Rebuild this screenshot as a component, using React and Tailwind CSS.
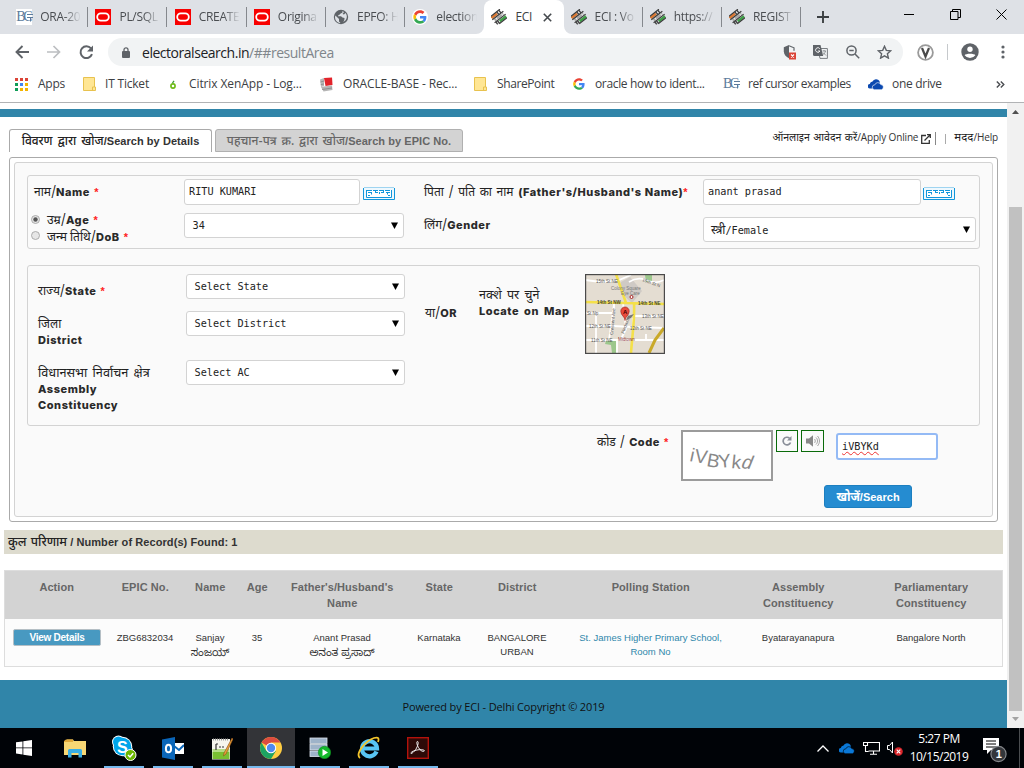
import React from "react";

function Oracle() {
  return (
    <svg width="16" height="16" viewBox="0 0 16 16" className="shrink-0">
      <rect width="16" height="16" fill="#f80000" />
      <rect x="2.2" y="4.4" width="11.6" height="7.2" rx="3.6" fill="none" stroke="#fff" strokeWidth="1.8" />
    </svg>
  );
}

function Bc() {
  return (
    <span className="flex h-4 w-4 shrink-0 items-center bg-white font-['Liberation_Serif',serif] text-[14px] leading-none tracking-[-2.5px] text-[#5b7b9c]">
      BC<svg width="6" height="9" viewBox="0 0 6 9" className="-ml-[3px] shrink-0"><path d="M0 1.500h6M0 4.500h6M3.500 4.500v4" stroke="#5b7b9c" fill="none" /></svg>
    </span>
  );
}

function Globe() {
  return (
    <svg width="16" height="16" viewBox="0 0 16 16" className="shrink-0">
      <circle cx="8" cy="8" r="7.2" fill="#5f6368" />
      <path d="M2.4 6.5 5 9l1 1v2.5l1.5 1.6C4.500 14 2 11.500 2 8zM9 2c1 1 .5 2-1 2.200C7 4.500 7 6 5.500 6L5 7.200h3l1.500 1.300 2 .5c0 2-.5 3-1.500 4 4-1.500 5-6 2.500-9L11 5.500 9.500 5 11 3z" fill="#dee1e6" />
    </svg>
  );
}

function Google({ s = 16 }) {
  return (
    <svg width={s} height={s} viewBox="0 0 48 48" className="shrink-0">
      <circle cx="24" cy="24" r="24" fill="#fff" />
      <g transform="translate(4 4) scale(.833)">
        <path fill="#EA4335" d="M24 9.500c3.540 0 6.710 1.220 9.210 3.600l6.850-6.850C35.900 2.380 30.470 0 24 0 14.620 0 6.510 5.380 2.560 13.220l7.980 6.190C12.430 13.720 17.740 9.500 24 9.500z" />
        <path fill="#4285F4" d="M46.980 24.550c0-1.570-.15-3.090-.38-4.550H24v9.020h12.940c-.58 2.960-2.260 5.480-4.780 7.180l7.730 6c4.510-4.180 7.090-10.360 7.090-17.650z" />
        <path fill="#FBBC05" d="M10.530 28.590c-.48-1.450-.76-2.990-.76-4.590s.27-3.140.76-4.590l-7.980-6.190C.92 16.460 0 20.120 0 24c0 3.880.92 7.540 2.560 10.780l7.970-6.190z" />
        <path fill="#34A853" d="M24 48c6.480 0 11.930-2.130 15.890-5.810l-7.730-6c-2.150 1.450-4.920 2.300-8.160 2.300-6.260 0-11.570-4.220-13.470-9.910l-7.980 6.190C6.510 42.620 14.620 48 24 48z" />
      </g>
    </svg>
  );
}

function Eci() {
  return (
    <svg width="16" height="16" viewBox="0 0 16 16" className="shrink-0">
      <g transform="rotate(-38 8 8)">
        <rect x="1.500" y="2.800" width="7" height="2.600" fill="#dd7a34" />
        <rect x="2.500" y="6.800" width="11" height="2.200" fill="#a9a9a9" />
        <rect x="6" y="10.600" width="8" height="2.600" fill="#3fa047" />
        <path d="M1 2.400h12.500M1 6.100h14M1 9.800h14M4 13.500h10" stroke="#3b3b3b" strokeWidth="1.200" />
        <path d="M9.500 2.500v3.500M12 2.500v3.500M2.500 10v3M4.500 10v3.500" stroke="#444" strokeWidth="1.400" />
        <path d="M10.800 3.500v1.500M5 7v2M12 7v2" stroke="#eee" strokeWidth="1" />
      </g>
    </svg>
  );
}

function OneDrive({ a = "#0b49b0", gap = "#fff", w = 16 }) {
  return (
    <svg width={w} height={w * 0.6875} viewBox="0 0 16 11" className="shrink-0">
      <path d="M4 9.500H2.200A2.200 2.200 0 0 1 1.800 5 3 3 0 0 1 4.500 2.600 4 4 0 0 1 11.500 2L12 6 6 10z" fill={a} />
      <path d="M6.500 10.700A2.400 2.400 0 0 1 6.800 5.900 3.200 3.200 0 0 1 12.800 5.600 2.600 2.600 0 0 1 13.500 10.700z" fill={a} stroke={gap} strokeWidth=".6" />
    </svg>
  );
}

const tabs = [
  { icon: <Bc />, label: "ORA-20", sep: true },
  { icon: <Oracle />, label: "PL/SQL", sep: true },
  { icon: <Oracle />, label: "CREATE", sep: true },
  { icon: <Oracle />, label: "Origina", sep: true },
  { icon: <Globe />, label: "EPFO: H", sep: true },
  { icon: <Google />, label: "election", sep: false },
  { icon: <Eci />, label: "ECI", active: true },
  { icon: <Eci />, label: "ECI : Vo", sep: true },
  { icon: <Eci />, label: "https://", sep: true },
  { icon: <Eci />, label: "REGIST", sep: true },
];

function TabStrip() {
  return (
    <div className="flex h-[34px] bg-[#dee1e6] pl-[9.3px] text-[12px] tracking-[-0.3px]">
      {tabs.map((t, i) =>
        t.active ? (
          <div key={i} className="relative flex w-[79.2px] shrink-0 items-center rounded-t-[8px] bg-white pl-[7px]">
            {t.icon}
            <span className="ml-2 w-[17px] whitespace-nowrap text-[#3c4043]">{t.label}</span>
            <svg width="9" height="9" viewBox="0 0 9 9" className="ml-[11px]"><path d="M.8.8l7.400 7.400M8.200.8.800 8.200" stroke="#45494d" strokeWidth="1.600" /></svg>
            <svg width="8" height="8" viewBox="0 0 8 8" className="absolute bottom-0 -left-2"><path d="M8 0v8H0A8 8 0 0 0 8 0z" fill="#fff" /></svg>
            <svg width="8" height="8" viewBox="0 0 8 8" className="absolute -right-2 bottom-0"><path d="M0 0v8h8A8 8 0 0 1 0 0z" fill="#fff" /></svg>
          </div>
        ) : (
          <div key={i} className="flex w-[79.2px] shrink-0 items-center pl-[7px]">
            {t.icon}
            <span className="ml-2 w-[41px] whitespace-nowrap text-[#4a4d51] [mask-image:linear-gradient(to_right,#000_60%,transparent)]">{t.label}</span>
            {t.sep && <span className="ml-[6px] h-5 w-px bg-[#85888d]" />}
          </div>
        )
      )}
      <svg width="12" height="12" viewBox="0 0 12 12" className="mt-[11px] ml-[15.500px]"><path d="M6 0v12M0 6h12" stroke="#3c4043" strokeWidth="1.900" /></svg>
      <svg width="10" height="10" viewBox="0 0 10 10" className="mt-[9px] ml-[75px]"><path d="M0 5.500h10" stroke="#000" /></svg>
      <svg width="11" height="11" viewBox="0 0 11 11" className="mt-[9px] ml-[36px]"><path d="M.5 2.500h7.500v8H.5zM2.500 2.500v-2h8v8H8" fill="none" stroke="#000" /></svg>
      <svg width="11" height="11" viewBox="0 0 11 11" className="mt-[9px] ml-[35px]"><path d="M.5.5l10 10M10.500.5l-10 10" stroke="#000" /></svg>
    </div>
  );
}

function Toolbar() {
  return (
    <div className="flex h-[36px] items-center bg-white pl-[15px]">
      <svg width="14" height="14" viewBox="0 0 14 14"><path d="M14 7H1.500M7.500 1 1.500 7l6 6" fill="none" stroke="#5f6368" strokeWidth="1.900" /></svg>
      <svg width="14" height="14" viewBox="0 0 14 14" className="ml-[18px]"><path d="M0 7h12.500M6.500 1l6 6-6 6" fill="none" stroke="#bcbec1" strokeWidth="1.700" /></svg>
      <svg width="15" height="15" viewBox="0 0 15 15" className="ml-[18px]"><path d="M13 9.200A5.900 5.900 0 1 1 12 3.400" fill="none" stroke="#5f6368" strokeWidth="2" /><path d="M14 .6v6H8z" fill="#5f6368" /></svg>
      <div className="ml-[14px] flex h-7 w-[795px] items-center rounded-full bg-[#f1f3f4] pl-[14px]">
        <svg width="8" height="11" viewBox="0 0 8 11"><rect y="4" width="8" height="7" rx="1" fill="#5f6368" /><path d="M2 4.500V2.800a2 2 0 0 1 4 0v1.700" fill="none" stroke="#5f6368" strokeWidth="1.300" /></svg>
        <span className="ml-[12px] w-[641px] text-[14px] tracking-[-0.47px] whitespace-nowrap text-[#202124]">electoralsearch.in<span className="text-[#80868b]">/##resultArea</span></span>
        <svg width="14" height="15" viewBox="0 0 14 15"><path d="M6 0 .8 2.200v4C.8 9.500 3 12 6 13.200z" fill="#5f6368" /><path d="M6 .8l5 2v3" fill="none" stroke="#5f6368" strokeWidth="1.200" /><rect x="6" y="7.500" width="7" height="7" fill="#db4437" /><path d="M8 9.500l3 3M11 9.500l-3 3" stroke="#fff" strokeWidth="1.100" /></svg>
        <svg width="15" height="14" viewBox="0 0 15 14" className="ml-[16px]"><path d="M5 3.500h9.400v9.900H7z" fill="#f1f3f4" stroke="#7b7f83" /><path d="M0 0h7.500l2.700 11H1.500A1.500 1.500 0 0 1 0 9.500z" fill="#5f6368" /><path d="M6.800 3.700A2.300 2.300 0 1 0 7 6H5" fill="none" stroke="#fff" strokeWidth=".9" /><path d="M9.500 6H13M11 5v1M12.500 6c-.5 2-1.500 3-2.500 3.500M10 7.500l3 3" fill="none" stroke="#7b7f83" strokeWidth=".8" /></svg>
        <svg width="14" height="14" viewBox="0 0 14 14" className="ml-[18px]"><circle cx="5.500" cy="5.500" r="4.600" fill="none" stroke="#5f6368" strokeWidth="1.500" /><path d="M9 9l4.200 4.200M3.300 5.500h4.400" stroke="#5f6368" strokeWidth="1.500" /></svg>
        <svg width="15" height="14" viewBox="0 0 15 14" className="ml-[17px]"><path d="M7.500 1.300l1.800 4.100 4.400.4-3.300 3 1 4.300-3.900-2.300-3.900 2.300 1-4.300-3.300-3 4.400-.4z" fill="none" stroke="#5f6368" strokeWidth="1.400" /></svg>
      </div>
      <svg width="17" height="17" viewBox="0 0 17 17" className="ml-[14px]"><circle cx="8.500" cy="8.500" r="7.400" fill="#fff" stroke="#9a9a9a" strokeWidth="1.800" /><path d="M5 4l3.500 8.500L12 4" fill="none" stroke="#4a4a4a" strokeWidth="2.200" /></svg>
      <span className="ml-[13px] h-4 w-px bg-[#c6c9cc]" />
      <svg width="18" height="18" viewBox="0 0 18 18" className="ml-[13px]"><circle cx="9" cy="9" r="8.700" fill="#5f6368" /><circle cx="9" cy="6.200" r="2.700" fill="#fff" /><path d="M3.600 12.300c1-2 9.800-2 10.800 0A6.700 6.700 0 0 1 9 15a6.700 6.700 0 0 1-5.400-2.700z" fill="#fff" /></svg>
      <svg width="4" height="14" viewBox="0 0 4 14" className="ml-[21.500px]"><g fill="#5f6368"><circle cx="2" cy="2" r="1.600" /><circle cx="2" cy="7" r="1.600" /><circle cx="2" cy="12" r="1.600" /></g></svg>
    </div>
  );
}

function Folder() {
  return (
    <svg width="13" height="14" viewBox="0 0 13 14" className="shrink-0"><path d="M.5.5h11v9.500h1v3.500H.5z" fill="#ffe694" stroke="#e8c24f" /><path d="M9.500 13.500V10h2" fill="none" stroke="#e8c24f" /></svg>
  );
}

function Mark({ icon, label, cls }) {
  return (
    <div className={"flex shrink-0 items-center whitespace-nowrap " + cls}>
      {icon}
      <span>{label}</span>
    </div>
  );
}

function Bookmarks() {
  const colors = ["#db4437", "#db4437", "#db4437", "#0f9d58", "#4285f4", "#f4b400", "#0f9d58", "#f4b400", "#f4b400"];
  return (
    <div className="flex h-[33px] items-center border-b border-[#b1b3b5] bg-white pb-[4px] pl-[15px] text-[12px] text-[#3c4043]">
      <Mark cls="w-[68px] gap-[10px] tracking-[-0.25px]" label="Apps" icon={<svg width="13" height="13" viewBox="0 0 13 13">{colors.map((c, i) => <rect key={i} x={(i % 3) * 5} y={Math.floor(i / 3) * 5} width="3" height="3" fill={c} />)}</svg>} />
      <Mark cls="w-[87px] gap-[9px] tracking-[-0.2px]" label="IT Ticket" icon={<Folder />} />
      <Mark cls="w-[149px] gap-[13px] tracking-[-0.1px]" label="Citrix XenApp - Log..." icon={<svg width="6" height="9" viewBox="0 0 6 9"><circle cx="3" cy="6" r="2.100" fill="none" stroke="#6cbb14" strokeWidth="1.600" /><path d="M2.500 3 4 .8" stroke="#3c9b35" strokeWidth="1.300" /></svg>} />
      <Mark cls="w-[155px] gap-[9px] tracking-[-0.12px]" label="ORACLE-BASE - Rec..." icon={<svg width="15" height="15" viewBox="0 0 15 15"><path d="M1 2.500 5 1v8l-3 1z" fill="#b9b9b9" /><path d="M5 1l8-.5.5 7.500-7 1z" fill="#e2232a" /><path d="M2 10l4.500-.8L13 8.500l.5 4.500-9 1.500z" fill="#b5b5b5" /><path d="M1.500 5 5 4M1.800 7.500 5 7M3 12.500l10-1.500" stroke="#868686" strokeWidth=".8" /></svg>} />
      <Mark cls="w-[98px] gap-[10px] tracking-[-0.4px]" label="SharePoint" icon={<Folder />} />
      <Mark cls="w-[151px] gap-[9px] tracking-[-0.35px]" label="oracle how to ident..." icon={<Google s={14} />} />
      <Mark cls="w-[145px] gap-[9px] tracking-[-0.45px]" label="ref cursor examples" icon={<Bc />} />
      <Mark cls="w-[128px] gap-[8px] tracking-[-0.3px]" label="one drive" icon={<OneDrive />} />
      <svg width="9" height="7" viewBox="0 0 9 7"><path d="M.8.5l3 3-3 3M4.800.5l3 3-3 3" fill="none" stroke="#4a4d51" strokeWidth="1.400" /></svg>
    </div>
  );
}

function Keyboard() {
  return (
    <svg width="32" height="13" viewBox="0 0 32 13" className="shrink-0">
      <path d="M.5 1v11.500h31V1" fill="#eef8fe" stroke="#1296db" />
      <path d="M1 .5h30" stroke="#9fd4f0" />
      <path d="M3.500 3v7.500h25V3" fill="#fff" stroke="#1296db" />
      <path d="M4 3.500h24" stroke="#1296db" strokeDasharray="5 1" />
      <path d="M5 5.500h4M13 5.500h2M18 5.500h2M23 5.500h4M5 8.500h2M25 8.500h2" stroke="#1296db" />
      <path d="M8.500 5v2.500M12.500 3v3M16.500 5v2M20.500 3v3M24.500 5v2.500" stroke="#1296db" />
    </svg>
  );
}

const MONO = "font-['DejaVu_Sans_Mono','Noto_Sans',monospace] text-[10.2px] text-[#222] whitespace-pre";
const B = "font-['Inter','Noto_Sans',sans-serif] font-extrabold text-[11px] tracking-[0.55px] text-[#2a2a2a]";

function Arrow() {
  return <svg width="7" height="7" viewBox="0 0 7 7" className="-mt-px"><path d="M0 .5h7L3.500 7z" fill="#000" /></svg>;
}

function Select({ label, cls }) {
  return (
    <div className={"flex h-[25px] shrink-0 items-center justify-between rounded-[3px] border border-[#d3d3d3] bg-white pr-[5px] pl-[7.500px] " + MONO + " " + cls}>
      <span>{label}</span>
      <Arrow />
    </div>
  );
}

function Field({ label, cls }) {
  return (
    <div className={"flex h-[26px] shrink-0 items-center rounded-[3px] border border-[#d3d3d3] bg-white px-[4px] " + MONO + " " + cls}>
      <span>{label}</span>
    </div>
  );
}

function Radio({ on }) {
  return (
    <svg width="9" height="9" viewBox="0 0 9 9" className="shrink-0"><circle cx="4.500" cy="4.500" r="4" fill="#e6e6e6" stroke="#a4a4a4" strokeWidth=".9" />{on && <circle cx="4.500" cy="4.500" r="2.200" fill="#555" />}</svg>
  );
}

function Hi({ children, cls = "text-[12px]" }) {
  return <span className={"font-['Noto_Sans_Devanagari','Noto_Sans',sans-serif] tracking-normal text-[#222] " + cls}>{children}</span>;
}

function Star() {
  return <span className="font-['Liberation_Sans',sans-serif] text-[11px] font-bold text-[#f22]">*</span>;
}

function MapThumb() {
  return (
    <svg width="80" height="80" viewBox="0 0 80 80" className="shrink-0">
      <rect width="80" height="80" fill="#e4ddd2" />
      <path d="M36 8l9-5 12 14-10 12-12-11z" fill="#cfcac5" />
      <path d="M60 1h7v7h-6zM21 67h10v12h-4l-1-8-6-1z" fill="#9cc78c" />
      <g stroke="#fff" strokeWidth="1.800" fill="none">
        <path d="M0 6l16 2 18-2 12-5M44 8c6-4 12-4 17-2s10 4 18 0M0 39h29v-9M0 52h28l20 1 31 1M0 66h79M11 39v40M32 66v13M29 30l-5 36M38 29l3 26-5 10M49 42h30M48 54V44M61 60v7" />
      </g>
      <g stroke="#f4e04a" strokeWidth="2.600" fill="none"><path d="M0 28l79 2M31 0l10 29M49 29c1 15-2 35-3 50" /></g>
      <path d="M79 54L70 66l-6 13" stroke="#c9a929" strokeWidth="3" fill="none" />
      <g fontFamily="Liberation Sans" fontSize="4.500" fill="#555">
        <text x="11" y="9">15th St NE</text><text x="26" y="16" fill="#777">Colony Square</text><text x="36" y="20.500" fill="#777">Eye Care</text>
        <text x="12" y="29.500" fill="#443" fontWeight="bold">14th St NW</text><text x="53" y="31" fill="#443" fontWeight="bold">14th St NE</text>
        <text x="2" y="40.500">St Np</text><text x="57" y="43.500">13th St NE</text><text x="4" y="53.500">12th St NE</text><text x="45" y="55.500">12th St NE</text><text x="6" y="67.500">11th St NE</text><text x="33" y="66.500" fill="#833">Midtown</text>
        <text transform="translate(28 61) rotate(-85)">Crescent Ave</text><text transform="translate(39 60) rotate(-70)">Piedmont</text><text transform="translate(57 7) rotate(20)">15th St N</text>
      </g>
      <circle cx="46.500" cy="23" r="1.500" fill="#fff" stroke="#a22" />
      <path d="M41 46l2-4 6-2-3 4z" fill="#777" />
      <path d="M40 46.500c0-4-4.200-5-4.200-9.300a4.200 4.200 0 0 1 8.400 0c0 4.300-4.200 5.300-4.200 9.300z" fill="#ea4b3c" stroke="#a3281f" strokeWidth=".7" />
      <text x="37.900" y="39.500" fontFamily="Liberation Sans" fontSize="6" fontWeight="bold" fill="#400">A</text>
      <rect x=".6" y=".6" width="78.800" height="78.800" fill="none" stroke="#4a4a4a" strokeWidth="1.200" />
    </svg>
  );
}

function Personal() {
  return (
    <div className="ml-[12px] flex h-[74px] w-[953px] rounded-[3px] border border-[#d3d3d3]">
      <div className="w-[156px] whitespace-nowrap">
        <div className="mt-[5px] ml-[6px] h-[18px] leading-[18px]"><Hi>नाम/</Hi><b className={B}>Name</b> <Star /></div>
        <div className="mt-[12px] ml-[3px] flex h-[16px] items-center gap-[7px] leading-[16px]"><Radio on /><span className="pt-[1px]"><Hi>उम्र/</Hi><b className={B}>Age</b> <Star /></span></div>
        <div className="ml-[3px] flex h-[17px] items-center gap-[7px] leading-[16px]"><Radio /><span className="pt-[1px]"><Hi>जन्म तिथि/</Hi><b className={B}>DoB</b> <Star /></span></div>
      </div>
      <div className="w-[240px]">
        <div className="mt-[3px] flex items-center gap-[3px]"><Field cls="w-[176px]" label="RITU KUMARI" /><span className="pt-[3px]"><Keyboard /></span></div>
        <Select cls="mt-[8px] w-[220px]" label="34" />
      </div>
      <div className="w-[279px] whitespace-nowrap">
        <div className="mt-[5px] h-[18px] leading-[18px]"><Hi cls="text-[12px] [word-spacing:1.5px]">पिता / पति का नाम </Hi><b className={B}>(Father's/Husband's Name)</b><Star /></div>
        <div className="mt-[15px] h-[18px] leading-[18px]"><Hi>लिंग/</Hi><b className={B}>Gender</b></div>
      </div>
      <div>
        <div className="mt-[3px] flex items-center gap-[2px]"><Field cls="w-[218px]" label="anant prasad" /><span className="pt-[3px]"><Keyboard /></span></div>
        <div className={"mt-[12px] flex h-[25px] w-[273px] items-center justify-between rounded-[3px] border border-[#d3d3d3] bg-white pr-[5px] pl-[7px] " + MONO}>
          <span className="pt-[2px]"><Hi cls="text-[12px]">स्त्री</Hi>/Female</span>
          <Arrow />
        </div>
      </div>
    </div>
  );
}

function Place() {
  return (
    <div className="mt-[16px] ml-[12px] flex h-[161px] w-[953px] rounded-[3px] border border-[#d3d3d3] whitespace-nowrap">
      <div className="w-[158px] pl-[10px] leading-[16px]">
        <div className="mt-[15px] h-[16px]"><Hi>राज्य/</Hi><b className={B}>State</b> <Star /></div>
        <div className="mt-[17px] h-[16px]"><Hi>जिला</Hi></div>
        <div className="h-[16px]"><b className={B}>District</b></div>
        <div className="mt-[17px] h-[16px]"><Hi cls="text-[12.700px] [word-spacing:2px]">विधानसभा निर्वाचन क्षेत्र</Hi></div>
        <div className="h-[16px]"><b className={B}>Assembly</b></div>
        <div className="h-[16px]"><b className={B}>Constituency</b></div>
      </div>
      <div className="w-[239px]">
        <Select cls="mt-[8px] w-[219px]" label="Select State" />
        <Select cls="mt-[12px] w-[219px]" label="Select District" />
        <Select cls="mt-[24px] w-[219px]" label="Select AC" />
      </div>
      <div className="mt-[37px] h-4 w-[54px] leading-4"><Hi>या/</Hi><b className={B}>OR</b></div>
      <div className="mt-[19px] w-[106px] leading-4">
        <div className="h-4"><Hi cls="text-[12.500px] [word-spacing:2px]">नक्शे पर चुने</Hi></div>
        <div className="h-4 [word-spacing:2px]"><b className={B}>Locate on Map</b></div>
      </div>
      <div className="mt-[8px]"><MapThumb /></div>
    </div>
  );
}

function Captcha() {
  return (
    <div>
      <div className="mt-[4px] ml-[582px] flex h-[51px] whitespace-nowrap">
        <div className="mt-[2px] h-4 w-[84px] leading-4"><Hi cls="text-[12px] [word-spacing:1px]">कोड / </Hi><b className={B}>Code</b> <Star /></div>
        <div className="h-[51px] w-[92px] border-2 border-[#9b9b9b] bg-white">
          <svg width="88" height="47" viewBox="0 0 88 47">
            <g fontFamily="Liberation Sans" fontSize="19" fill="#888">
              <text transform="translate(6 29) rotate(12)">i</text><text transform="translate(11 30) rotate(8)">V</text><text transform="translate(23 34) rotate(10)">B</text>
              <text transform="translate(36 36) rotate(-6)">Y</text><text transform="translate(48 36) rotate(6)">k</text><text transform="translate(57 36) rotate(6) skewX(-16)">d</text>
            </g>
          </svg>
        </div>
        <div className="ml-[3px] flex h-[22px] w-[22px] items-center justify-center border border-[#0a6b0a]">
          <svg width="10" height="10" viewBox="0 0 10 10"><path d="M8.500 6.500A3.800 3.800 0 1 1 7.600 2.300" fill="none" stroke="#8a8f99" strokeWidth="1.700" /><path d="M9.500 0v4.500H5z" fill="#8a8f99" /></svg>
        </div>
        <div className="ml-[3px] flex h-[22px] w-[23px] items-center justify-center border border-[#0a6b0a]">
          <svg width="14" height="12" viewBox="0 0 14 12"><path d="M0 3.500h3L7 .2v11.600L3 8.500H0z" fill="#888" /><path d="M8.500 4c1 1 1 3 0 4M10 2.500c2 2 2 5 0 7M11.500 1c2.600 3 2.600 7 0 10" fill="none" stroke="#999" strokeWidth=".9" /></svg>
        </div>
        <div className={"mt-[3px] ml-[12px] flex h-[27px] w-[102px] items-center rounded-[3px] border-2 border-[#94baf5] bg-white pl-[4px] " + MONO}>
          <span className="[text-decoration:underline_wavy_#e33_0.6px] [text-underline-offset:1px]">iVBYKd</span>
        </div>
      </div>
      <div className="mt-[4px] ml-[809px] flex h-[23px] w-[88px] items-center justify-center rounded-[3px] border border-[#1c7fc0] bg-[#258cd1] whitespace-nowrap">
        <span className="font-['Liberation_Sans','Noto_Sans_Devanagari',sans-serif] text-[11px] font-bold text-white"><span className="text-[12px]">खोजें</span>/Search</span>
      </div>
    </div>
  );
}

const cols = [
  ["Action", "w-[105px]"], ["EPIC No.", "w-[72px]"], ["Name", "w-[58px]"], ["Age", "w-[36px]"], ["Father's/Husband's\nName", "w-[134px]"],
  ["State", "w-[60px]"], ["District", "w-[96px]"], ["Polling Station", "w-[171px]"], ["Assembly\nConstituency", "w-[124px]"], ["Parliamentary\nConstituency", "w-[142px]"],
];
const vals = [
  null, "ZBG6832034",
  <>Sanjay<br /><span className="text-[10.500px]">ಸಂಜಯ್</span></>,
  "35",
  <>Anant Prasad<br /><span className="text-[10.500px]">ಅನಂತ ಪ್ರಸಾದ್</span></>,
  "Karnataka", "BANGALORE\nURBAN", "St. James Higher Primary School,\nRoom No", "Byatarayanapura", "Bangalore North",
];

function Results() {
  return (
    <div className="ml-[4px] w-[999px] font-['Liberation_Sans','Noto_Sans_Devanagari','Noto_Sans_Kannada',sans-serif]">
      <div className="mt-[8px] h-[24px] bg-[#dddbce] pl-[4px] text-[11px] leading-[24px] font-bold tracking-[0.08px] whitespace-nowrap text-[#333]"><Hi cls="text-[12.500px] font-medium [word-spacing:1px]">कुल परिणाम</Hi> / Number of Record(s) Found: 1</div>
      <div className="mt-[16px] h-[97px] border border-[#ddd] bg-[#fcfcfc]">
        <div className="flex h-[48px] bg-[#d3d3d3] pt-[8px] text-center text-[11px] leading-4 font-bold tracking-[0.08px] whitespace-pre text-[#666]">
          {cols.map(([c, w]) => <div key={c} className={"shrink-0 pr-[1.500px] " + w}>{c}</div>)}
        </div>
        <div className="flex pt-[12px] text-center text-[9.500px] leading-[14px] tracking-normal whitespace-pre text-[#333]">
          {vals.map((v, i) => (
            <div key={i} className={"shrink-0 pr-[2px] " + cols[i][1] + (i === 7 ? " text-[#2f87ab]" : "")}>
              {v || <div className="mt-[-2px] ml-[8px] h-[17px] w-[88px] rounded-[2px] border border-[#b5bfc5] bg-[#4899c1] text-[10px] leading-[16px] font-bold tracking-[-0.25px] text-white">View Details</div>}
            </div>
          ))}
        </div>
      </div>
    </div>
  );
}

function Page() {
  return (
    <div className="w-[1007px] shrink-0">
      <div className="mt-[6px] h-[8px] bg-[#3085a9]" />
      <div className="flex h-[40px] items-start justify-between pt-[12px] pr-[9px] pl-[9px] font-['Liberation_Sans','Noto_Sans_Devanagari',sans-serif] text-[11px] font-bold tracking-[0.05px] whitespace-nowrap">
        <div className="flex gap-[4px]">
          <div className="h-[23px] w-[203px] rounded-t-[3px] border border-b-0 border-[#aaa] text-center leading-[23px] text-[#333]"><Hi cls="text-[12px] font-medium [word-spacing:2px]">विवरण द्वारा खोज</Hi>/Search by Details</div>
          <div className="h-[23px] w-[248px] -ml-px rounded-t-[3px] border border-[#b0b0b0] bg-[#d3d3d3] text-center leading-[23px] text-[#666]"><span className="font-['Noto_Sans_Devanagari','Noto_Sans',sans-serif] text-[12px] font-medium [word-spacing:1.7px]">पहचान-पत्र क्र. द्वारा खोज</span>/Search by EPIC No.</div>
        </div>
        <div className="flex items-center pt-px font-['Open_Sans','Noto_Sans_Devanagari',sans-serif] text-[10px] font-normal tracking-[-0.15px] text-[#333]">
          <span><Hi cls="text-[10.500px] [word-spacing:0.8px]">ऑनलाइन आवेदन करें</Hi>/Apply Online</span>
          <svg width="10" height="10" viewBox="0 0 10 10" className="ml-[3px]"><path d="M5 1.500H.7v7.800h7.600V6M3.500 6.500 9 1M6 .7h3.300V4" fill="none" stroke="#333" strokeWidth="1.300" /></svg>
          <span className="ml-[4px] h-[13px] w-px bg-[#888]" />
          <span className="ml-[9px] h-[10px] w-px bg-[#aaa]" />
          <span className="ml-[8px]"><Hi cls="text-[11.500px]">मदद</Hi>/Help</span>
        </div>
      </div>
      <div className="ml-[9px] h-[365px] w-[989px] rounded-[3px] border border-[#aaa] p-[4px]">
        <div className="h-[355px] rounded-[3px] border border-[#d3d3d3] bg-[#fafafa] pt-[12px]">
          <Personal />
          <Place />
          <Captcha />
        </div>
      </div>
      <Results />
      <div className="mt-[13px] h-[48px] bg-[#3085a9] pt-[3px] text-center text-[11px] leading-[48px] tracking-[-0.15px] text-[#111]">Powered by ECI - Delhi Copyright © 2019</div>
    </div>
  );
}

function Scrollbar() {
  return (
    <div className="flex w-[17px] flex-col items-center bg-[#f1f1f1]">
      <svg width="7" height="4" viewBox="0 0 7 4" className="mt-[7px]"><path d="M0 4l3.500-4L7 4z" fill="#505050" /></svg>
      <div className="mt-[93px] h-[504px] w-[13px] bg-[#c1c1c1]" />
      <svg width="7" height="4" viewBox="0 0 7 4" className="mt-[6px]"><path d="M0 0h7L3.500 4z" fill="#a3a3a3" /></svg>
    </div>
  );
}

const apps = [
  { cls: "w-[48px]", line: "", icon: <svg width="16" height="16" viewBox="0 0 16 16"><path d="M0 2.300 6.500 1.400v6.100H0zM7.300 1.300 16 0v7.500H7.300zM0 8.300h6.500v6.200L0 13.600zM7.300 8.300H16V16l-8.700-1.300z" fill="#fff" /></svg> },
  { cls: "w-[51px] pl-[2px]", line: "", icon: <svg width="22" height="19" viewBox="0 0 22 19"><path d="M0 2h2l1-1.500h6L10 2h12v14H0z" fill="#f7d774" /><path d="M2 .5h7V3H0V2z" fill="#e0a93a" /><path d="M4 18.500v-7a1.500 1.500 0 0 1 1.500-1.500h11a1.500 1.500 0 0 1 1.500 1.500v7h-3.500V14h-7v4.500z" fill="#38aee6" /></svg> },
  { cls: "w-[49px] pl-[1px]", line: "w-[40px]", icon: <svg width="26" height="26" viewBox="0 0 26 26"><circle cx="7.500" cy="7" r="6.500" fill="#fff" /><circle cx="15.500" cy="15.500" r="6.500" fill="#fff" /><circle cx="11.500" cy="11.500" r="9.700" fill="#fff" /><circle cx="7.500" cy="7" r="5.500" fill="#00a5ea" /><circle cx="15.500" cy="15.500" r="5.500" fill="#00a5ea" /><circle cx="11.500" cy="11.500" r="8.700" fill="#00a5ea" /><text x="6" y="17.500" fontFamily="Liberation Sans" fontSize="16" fontWeight="bold" fill="#fff">S</text><circle cx="19.500" cy="20" r="5.500" fill="#6bb700" stroke="#fff" strokeWidth="1" /><path d="M17 20l2 2 3.200-3.800" fill="none" stroke="#fff" strokeWidth="1.500" /></svg> },
  { cls: "w-[49px]", line: "w-[40px]", icon: <svg width="22" height="23" viewBox="0 0 22 23"><rect x="9" y="6" width="13" height="11" fill="#fff" /><path d="M12 9l5 4 5-5" fill="none" stroke="#0a66b9" strokeWidth="2" /><path d="M0 2.500 13 0v23L0 20.500z" fill="#0a66b9" /><ellipse cx="6.500" cy="11.500" rx="2.600" ry="3.700" fill="none" stroke="#fff" strokeWidth="2" /></svg> },
  { cls: "w-[50px]", line: "w-[40px]", icon: <svg width="22" height="23" viewBox="0 0 22 23"><path d="M1 2h18v20.500H1z" fill="#f6f6ee" /><path d="M1.500 15h17v7h-17z" fill="#78bf31" /><path d="M1.500 12h17v3h-17z" fill="#b5dc86" /><path d="M2 2.500h16" stroke="#999" strokeDasharray="1 1" strokeWidth="2" /><path d="M5 7v6M8 10h2M11 10h2M5 7h2" stroke="#333" strokeWidth="1.200" /><path d="M21 1 13 16l-.5 3 2.500-2 7-15z" fill="#e9a13a" stroke="#8a4c17" strokeWidth=".6" /></svg> },
  { cls: "w-[48px] bg-[#333438]", line: "w-[48px]", icon: <svg width="22" height="22" viewBox="0 0 22 22"><circle cx="11" cy="11" r="11" fill="#ffcd42" /><path d="M11 11 1.500 5.500A11 11 0 0 1 20.500 5.500H11z" fill="#dc4c3f" /><path d="M1.500 5.500A11 11 0 0 0 11 22l5-8.200-5 2.200-4.700-2.300z" fill="#1da462" /><circle cx="11" cy="11" r="5.200" fill="#fff" /><circle cx="11" cy="11" r="4.200" fill="#4f8af0" /></svg> },
  { cls: "w-[49px]", line: "w-[40px]", icon: <svg width="22" height="22" viewBox="0 0 22 22"><g fill="#9eb3c9" stroke="#dfe7ef" strokeWidth=".8"><rect x="1" y="1" width="17" height="5.500" /><rect x="1" y="7.500" width="17" height="5.500" /><rect x="1" y="14" width="17" height="5.500" /></g><circle cx="15.500" cy="15.500" r="6.200" fill="#14b82c" stroke="#0b8a1c" strokeWidth=".6" /><path d="M13.500 12l5.500 3.500-5.500 3.500z" fill="#fff" /></svg> },
  { cls: "w-[49px]", line: "w-[40px]", icon: <svg width="24" height="24" viewBox="0 0 24 24"><path d="M19.500 15.500A7.500 7.500 0 1 1 20 12.500H7" fill="none" stroke="#58c5f4" strokeWidth="4.200" /><path d="M3 22C-2 18 8 5 17 2c5-1.500 5 1 4 4" fill="none" stroke="#f4c52b" strokeWidth="1.800" /></svg> },
  { cls: "w-[49px]", line: "w-[40px]", icon: <svg width="22" height="22" viewBox="0 0 22 22"><rect x=".7" y=".7" width="20.600" height="20.600" fill="#2d0a08" stroke="#b3120b" strokeWidth="1.400" /><path d="M10.500 4.500c2 0-.5 9-6 12-1 .5-1-1.500 2-2.500 3-1.200 8-2 10.500-.8 1.500 1-1 2-3 .3C11 11.500 8.500 4.500 10.500 4.500z" fill="none" stroke="#fff" strokeWidth=".9" /></svg> },
];

function Taskbar() {
  return (
    <div className="flex h-[40px] bg-[#000307] text-white">
      {apps.map((a, i) => (
        <div key={i} className={"relative flex shrink-0 items-center justify-center " + a.cls}>
          {a.icon}
          {a.line && <span className={"absolute bottom-0 h-[2px] bg-[#76b9ed] " + a.line} />}
        </div>
      ))}
      <div className="flex flex-1 items-center justify-end">
        <svg width="12" height="7" viewBox="0 0 12 7"><path d="M.5 6.500 6 1l5.500 5.500" fill="none" stroke="#fff" strokeWidth="1.300" /></svg>
        <span className="ml-[10px]"><OneDrive a="#0a78d7" gap="#000307" /></span>
        <svg width="17" height="14" viewBox="0 0 17 14" className="ml-[8px]"><path d="M5 1.500h11.500v8.500H5.500M10.500 10v3M7 13.300h7M.5 1.500h4v3h-4zM2.500 4.500v6h3" fill="none" stroke="#fff" strokeWidth="1.100" /></svg>
        <svg width="16" height="15" viewBox="0 0 16 15" className="ml-[7px]"><path d="M.5 4.500h2l3-3.500v11l-3-3.500h-2z" fill="none" stroke="#fff" /><circle cx="11.500" cy="10.500" r="4.300" fill="#d9252a" /><path d="M9.700 8.700l3.600 3.600M13.300 8.700l-3.600 3.600" stroke="#fff" strokeWidth="1.100" /></svg>
        <div className="ml-[5px] w-[62px] text-center text-[12px] leading-[18px] tracking-[-0.5px] whitespace-nowrap">
          <div>5:27 PM</div>
          <div>10/15/2019</div>
        </div>
        <svg width="26" height="26" viewBox="0 0 26 26" className="mt-[3px] mr-[4px] ml-[12px]"><path d="M1 1h16v12h-8l-4 4v-4H1z" fill="#fff" /><path d="M4 4h10M4 7h10M4 10h10" stroke="#000" /><circle cx="16.500" cy="17" r="7.600" fill="#33363a" stroke="#84878b" strokeWidth="1.200" /><text x="13.800" y="21" fontFamily="Liberation Sans" fontSize="11" fontWeight="bold" fill="#fff">1</text></svg>
        <span className="mr-[4px] ml-[7px] h-10 w-px bg-[#4a4d50]" />
      </div>
    </div>
  );
}

export default function App() {
  return (
    <div className="flex h-[768px] w-[1024px] flex-col overflow-hidden bg-white font-['Open_Sans','Noto_Sans',sans-serif]">
      <TabStrip />
      <Toolbar />
      <Bookmarks />
      <div className="flex h-[625px] shrink-0 overflow-hidden">
        <Page />
        <Scrollbar />
      </div>
      <Taskbar />
    </div>
  );
}
